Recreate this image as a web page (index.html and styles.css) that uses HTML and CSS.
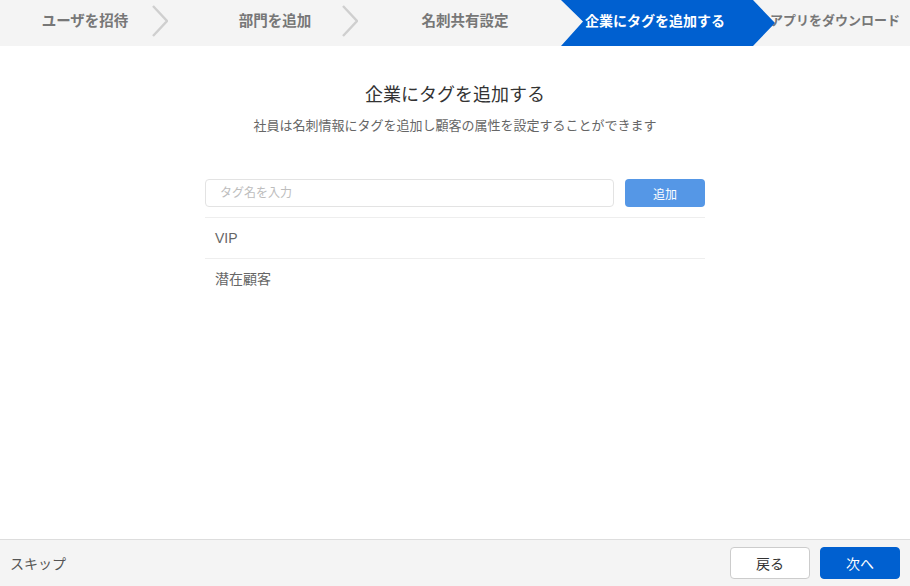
FILE: index.html
```html
<!DOCTYPE html>
<html lang="ja">
<head>
    <meta charset="UTF-8">
    <meta name="viewport" content="width=device-width, initial-scale=1.0">
    <title>企業にタグを追加する</title>
    <link rel="stylesheet" href="styles.css">
</head>
<body>
    <nav class="steps">
        <div class="step">ユーザを招待</div>
        <svg class="chev" width="16" height="45" viewBox="0 0 16 45"><polyline points="1,6 15,21 1,36" fill="none" stroke="#cfcfcf" stroke-width="2.4"/></svg>
        <div class="step">部門を追加</div>
        <svg class="chev" width="16" height="45" viewBox="0 0 16 45"><polyline points="1,6 15,21 1,36" fill="none" stroke="#cfcfcf" stroke-width="2.4"/></svg>
        <div class="step">名刺共有設定</div>
        <div class="step active">企業にタグを追加する</div>
        <div class="step last">アプリをダウンロード</div>
    </nav>

    <main class="content">
        <h1 class="title">企業にタグを追加する</h1>
        <p class="desc">社員は名刺情報にタグを追加し顧客の属性を設定することができます</p>

        <div class="tag-box">
            <div class="tag-form">
                <input type="text" class="tag-input" placeholder="タグ名を入力">
                <button class="btn-add">追加</button>
            </div>
            <ul class="tag-list">
                <li>VIP</li>
                <li>潜在顧客</li>
            </ul>
        </div>
    </main>

    <footer class="footer">
        <span class="skip">スキップ</span>
        <div class="actions">
            <button class="btn btn-back">戻る</button>
            <button class="btn btn-next">次へ</button>
        </div>
    </footer>
</body>
</html>
```

FILE: styles.css
```css
* {
    box-sizing: border-box;
}
html, body {
    height: 100%;
}
body {
    margin: 0;
    font-family: "Liberation Sans", "Noto Sans CJK JP", sans-serif;
    background: #ffffff;
    color: #333;
    display: flex;
    flex-direction: column;
}
.steps {
    display: flex;
    height: 46px;
    background: #f4f4f4;
    overflow: hidden;
}
.step {
    flex: none;
    width: 170px;
    line-height: 42px;
    text-align: center;
    font-size: 14.5px;
    font-weight: bold;
    color: #777;
    white-space: nowrap;
}
.chev {
    flex: none;
    margin-left: -18px;
    margin-right: 22px;
}
.step.active {
    width: 214px;
    margin-left: 11px;
    padding-left: 24px;
    text-align: left;
    font-size: 14px;
    color: #ffffff;
    background: #0060d0;
    clip-path: polygon(0 0, calc(100% - 22px) 0, 100% 50%, calc(100% - 22px) 100%, 0 100%, 22px 47%);
}
.step.last {
    width: 140px;
    margin-left: -5px;
    text-align: left;
    font-size: 13px;
}
.content {
    flex: 1;
    padding-top: 36px;
}
.title {
    margin: 0;
    text-align: center;
    font-size: 18px;
    font-weight: normal;
    color: #333;
    line-height: 26px;
}
.desc {
    margin: 8px 0 0;
    text-align: center;
    font-size: 13px;
    color: #666;
    line-height: 20px;
}
.tag-box {
    width: 500px;
    margin: 43px auto 0;
}
.tag-form {
    display: flex;
    gap: 11px;
}
.tag-input {
    flex: 1;
    height: 28px;
    border: 1px solid #e3e3e3;
    border-radius: 4px;
    padding: 0 14px;
    font-family: inherit;
    font-size: 12px;
    color: #333;
    outline: none;
}
.tag-input::placeholder {
    color: #bdbdbd;
}
.btn-add {
    width: 80px;
    height: 28px;
    border: none;
    border-radius: 4px;
    background: #5597e6;
    color: #ffffff;
    font-family: inherit;
    font-size: 12px;
}
.tag-list {
    list-style: none;
    margin: 10px 0 0;
    padding: 0;
}
.tag-list li {
    border-top: 1px solid #eeeeee;
    height: 41px;
    line-height: 40px;
    padding-left: 10px;
    font-size: 14px;
    color: #666;
}
.footer {
    flex: none;
    height: 47px;
    background: #f4f4f4;
    border-top: 1px solid #dddddd;
    display: flex;
    align-items: center;
    justify-content: space-between;
    padding: 0 10px;
}
.skip {
    font-size: 14px;
    color: #555;
}
.actions {
    display: flex;
    gap: 10px;
}
.btn {
    width: 80px;
    height: 32px;
    border-radius: 4px;
    font-family: inherit;
    font-size: 14px;
}
.btn-back {
    background: #ffffff;
    border: 1px solid #cccccc;
    color: #333;
}
.btn-next {
    background: #0060d0;
    border: 1px solid #0060d0;
    color: #ffffff;
}
```
